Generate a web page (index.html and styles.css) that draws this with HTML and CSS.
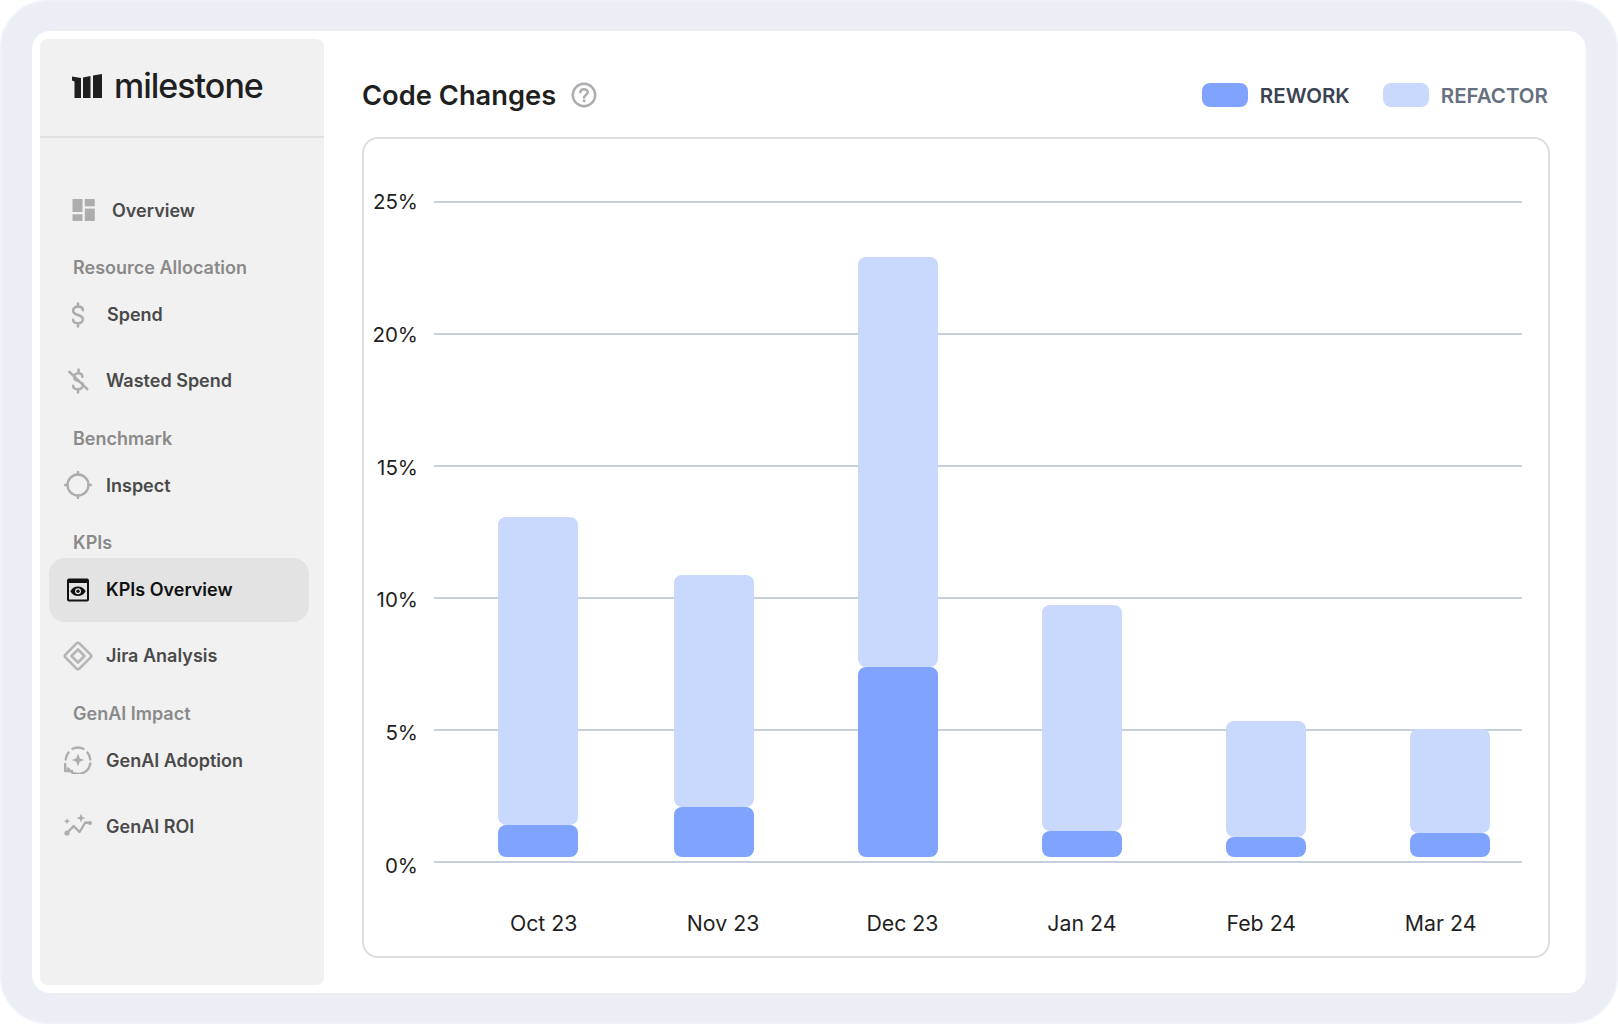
FILE: index.html
```html
<!DOCTYPE html>
<html lang="en">
<head>
<meta charset="utf-8" />
<title>Code Changes</title>
<link rel="stylesheet" href="styles.css">
</head>

<body>
<div class="frame">
	<div class="panel">
		<aside class="side">
			<div class="brand">
				<svg class="brand-mark" width="30" height="24" viewBox="0 0 30 24"><path d="M0 2.5 9 4V24H2.500V7.500L0 6.500Z"/><path d="M11 3.500 18.500 2V24H11Z"/><path d="M21 1.500 30 0V24H21Z"/></svg>
				<span class="brand-name">milestone</span>
			</div>
			<nav class="nav">
				<a class="nav-item nav-item-first">
					<svg class="icon-first" width="24" height="24" viewBox="0 0 24 24"><rect x="0.500" y="1" width="10" height="13"/><rect x="12.800" y="1" width="10" height="7.300"/><rect x="0.500" y="16.300" width="10" height="6.700"/><rect x="12.800" y="10.600" width="10" height="12.400"/></svg>
					<span>Overview</span>
				</a>
				<div class="nav-label">Resource Allocation</div>
				<a class="nav-item nav-item-spend">
					<span class="nav-icon"><svg class="stroke" width="26" height="26" viewBox="0 0 24 24"><path d="M16.500 7.500C16.500 5.500 14.500 4.300 12 4.300S7.500 5.800 7.500 8C7.500 10.500 10 11.300 12 12S16.500 13.500 16.500 16C16.500 18.200 14.500 19.700 12 19.700S7.500 18.500 7.500 16.500M12 1.500V4.300M12 19.700V22.500"/></svg></span>
					<span>Spend</span>
				</a>
				<a class="nav-item">
					<span class="nav-icon"><svg class="stroke" width="26" height="26" viewBox="0 0 24 24"><path d="M16 8C16 6 14.500 4.800 12.300 4.800C11 4.800 10 5.200 9.300 5.900M8.500 9.500C9 10.800 10.500 11.500 12 12M15.800 14C16.300 14.600 16.500 15.300 16.500 16C16.500 18.200 14.500 19.700 12 19.700S7.500 18.500 7.500 16.500M12.500 1.500V4.500M12 19.700V22.500M4 3.500 20.500 19.500"/></svg></span>
					<span>Wasted Spend</span>
				</a>
				<div class="nav-label">Benchmark</div>
				<a class="nav-item">
					<span class="nav-icon"><svg class="stroke" width="28" height="28" viewBox="0 0 28 28"><circle cx="14" cy="14" r="10.500"/><path d="M14 1V3.500M14 24.500V27M1 14H3.500M24.500 14H27"/></svg></span>
					<span>Inspect</span>
				</a>
				<div class="nav-label">KPIs</div>
				<a class="nav-item nav-item-on">
					<span class="nav-icon"><svg width="24" height="24" viewBox="0 0 24 24"><rect x="1" y="0.500" width="22" height="23" rx="2" fill="#111"/><rect x="3" y="5" width="18" height="16.500" fill="#e3e3e3"/><path d="M4.300 13.300C6.300 9.800 9.100 8.500 12 8.500S17.700 9.800 19.700 13.300C17.700 16.800 14.900 18.100 12 18.100S6.300 16.800 4.300 13.300Z" fill="#111"/><circle cx="12" cy="13.300" r="3" fill="#e3e3e3"/><circle cx="12" cy="13.300" r="1.700" fill="#111"/></svg></span>
					<span>KPIs Overview</span>
				</a>
				<a class="nav-item">
					<span class="nav-icon"><svg class="stroke stroke-jira" width="30" height="30" viewBox="0 0 30 30"><path d="M13.600 2.400Q15 1 16.400 2.400L27.600 13.600Q29 15 27.600 16.400L16.400 27.600Q15 29 13.600 27.600L2.400 16.400Q1 15 2.400 13.600Z"/><path d="M15 8.500 21.500 15 15 21.500 8.500 15Z"/></svg></span>
					<span>Jira Analysis</span>
				</a>
				<div class="nav-label">GenAI Impact</div>
				<a class="nav-item">
					<span class="nav-icon"><svg class="stroke" width="28" height="28" viewBox="0 0 28 28"><path d="M8.500 2.800A12.300 12.300 0 0 1 19.500 2.800M23.500 6.500A12.300 12.300 0 0 1 26.300 13.500M1.700 13.500A12.300 12.300 0 0 1 4.500 6.500M26.300 17.500A12.300 12.300 0 0 1 4 22.500M1.200 18V25H8"/><path class="fill" d="M14 7.800 15.800 12.200 20.200 14 15.800 15.800 14 20.200 12.200 15.800 7.800 14 12.200 12.200Z"/></svg></span>
					<span>GenAI Adoption</span>
				</a>
				<a class="nav-item">
					<span class="nav-icon"><svg class="stroke" width="28" height="28" viewBox="0 0 28 28"><path d="M3 21 9.600 14 15.600 20 21.300 10.500 26.300 11"/><circle class="fill" cx="3" cy="21" r="2.600"/><circle class="fill" cx="26" cy="11" r="2"/><path class="fill" d="M17 1.500 18.200 4.800 21.500 6 18.200 7.200 17 10.500 15.800 7.200 12.500 6 15.800 4.800Z"/><path class="thin" d="M3 7.500V11M1.200 9.200H4.800"/></svg></span>
					<span>GenAI ROI</span>
				</a>
			</nav>
		</aside>

		<main class="main">
			<div class="head">
				<div class="title">
					<h1>Code Changes</h1>
					<svg class="help" width="26" height="26" viewBox="0 0 26 26"><circle cx="13" cy="13" r="11.200"/><path d="M9.300 10.200C9.500 8.200 11 7.200 13 7.200S16.800 8.500 16.800 10.300C16.800 12.800 13 13 13 15.500"/><circle class="help-dot" cx="13" cy="18.700" r="1.500"/></svg>
				</div>
				<div class="legend">
					<div class="legend-item legend-rework"><i></i>REWORK</div>
					<div class="legend-item legend-refactor"><i></i>REFACTOR</div>
				</div>
			</div>

			<div class="card">
				<div class="chart">
					<div class="y-axis">
						<span>25%</span><span>20%</span><span>15%</span><span>10%</span><span>5%</span><span>0%</span>
					</div>
					<div class="plot">
						<div class="grid"><i></i><i></i><i></i><i></i><i></i><i></i></div>
						<div class="bars">
							<div class="bar"><div class="seg-light" style="height:308px"></div><div class="seg-dark" style="height:32px"></div></div>
							<div class="bar"><div class="seg-light" style="height:232px"></div><div class="seg-dark" style="height:50px"></div></div>
							<div class="bar"><div class="seg-light" style="height:410px"></div><div class="seg-dark" style="height:190px"></div></div>
							<div class="bar"><div class="seg-light" style="height:226px"></div><div class="seg-dark" style="height:26px"></div></div>
							<div class="bar"><div class="seg-light" style="height:116px"></div><div class="seg-dark" style="height:20px"></div></div>
							<div class="bar"><div class="seg-light" style="height:104px"></div><div class="seg-dark" style="height:24px"></div></div>
						</div>
					</div>
				</div>
				<div class="x-axis">
					<span>Oct 23</span><span>Nov 23</span><span>Dec 23</span><span>Jan 24</span><span>Feb 24</span><span>Mar 24</span>
				</div>
			</div>
		</main>
	</div>
</div>
</body>
</html>
```

FILE: styles.css
```css
*{margin:0; padding:0; box-sizing:border-box;}
body{background:#fff; font-family:"Inter", "Liberation Sans", sans-serif; color:#1f1f1f;}

.frame{width:1618px; height:1024px; padding:29px 30px 29px 30px; background:#ebeef4; border:2px solid #eef2f9; border-radius:48px;}
.panel{display:flex; height:100%; padding:8px; background:#fff; border-radius:18px;}

/* sidebar */
.side{flex:none; width:284px; background:#f1f1f1; border-radius:8px;}
.brand{display:flex; align-items:center; gap:12px; height:99px; padding:0 0 4px 32px; border-bottom:2px solid #e2e2e2;}
.brand-mark{fill:#1f1f1f;}
.brand-name{font-size:34px; font-weight:500; letter-spacing:-1px; color:#1f1f1f;}

.nav{display:flex; flex-direction:column; padding:40px 15px 0 9px;}
.nav-item{display:flex; align-items:center; gap:12px; flex:none; height:64px; margin-bottom:2px; padding-left:13px; border-radius:16px; font-size:18px; font-weight:600; color:#4a4a4a;}
.nav-item-first{gap:16px; padding-left:23px;}
.nav-item-spend{gap:13px;}
.nav-item-on{background:#e3e3e3; color:#111;}
.nav-icon{display:flex; justify-content:center; align-items:center; flex:none; width:32px; height:32px;}
.nav-label{height:24px; margin:12px 0 2.500px; padding-left:24px; font-size:18px; font-weight:600; line-height:24px; color:#8a8a8a;}

.icon-first{fill:#adadad;}
.stroke{fill:none; stroke:#adadad; stroke-width:2.400; stroke-linecap:round; stroke-linejoin:round;}
.stroke-jira{stroke:#b5b5b5; stroke-width:2.600;}
.stroke .fill{fill:#adadad; stroke:none;}
.stroke .thin{stroke-width:1.500;}

/* main */
.main{display:flex; flex-direction:column; flex:1; min-width:0; padding:0 28px 27px 38px;}
.head{display:flex; justify-content:space-between; align-items:center; flex:none; height:98px; padding-top:14px;}
.title{display:flex; align-items:center; gap:15px;}
.title h1{font-size:27.300px; font-weight:600; color:#1f1f1f;}
.help{fill:none; stroke:#aeaeb2; stroke-width:2.500; stroke-linecap:round;}
.help-dot{fill:#aeaeb2; stroke:none;}

.legend{display:flex; gap:33px; margin-right:2px;}
.legend-item{display:flex; align-items:center; gap:12px; font-size:20.500px; font-weight:600;}
.legend-item i{display:block; width:46px; height:24px; border-radius:8px;}
.legend-rework{color:#3a4350;}
.legend-rework i{background:#7fa3ff;}
.legend-refactor{color:#667080;}
.legend-refactor i{background:#c9d9fd;}

/* chart */
.card{display:flex; flex-direction:column; flex:1; border:2px solid #dedede; border-radius:16px;}
.chart{display:flex; flex:none; height:662px; margin-top:62px;}
.y-axis{display:flex; flex-direction:column; justify-content:space-between; align-items:flex-end; flex:none; width:54px; margin:-11px 16px -15px 0; font-size:20.500px; line-height:24px; color:#1f1f1f;}
.plot{position:relative; width:1088px;}
.grid{position:absolute; inset:0; display:flex; flex-direction:column; justify-content:space-between;}
.grid i{display:block; height:2px; background:#c5d0dc;}
.bars{position:relative; display:flex; align-items:flex-end; gap:104px; height:100%; padding:0 0 6px 64px;}
.bar{flex:none; width:80px;}
.bar:first-child{margin-right:-8px;}
.seg-light{background:#c9d9fd; border-radius:8px;}
.seg-dark{background:#7fa3ff; border-radius:8px;}

.x-axis{display:grid; grid-template-columns:repeat(6, 179.400px); margin:48px 0 0 90px; font-size:21.300px; line-height:24px; text-align:center; color:#1f1f1f;}
```
